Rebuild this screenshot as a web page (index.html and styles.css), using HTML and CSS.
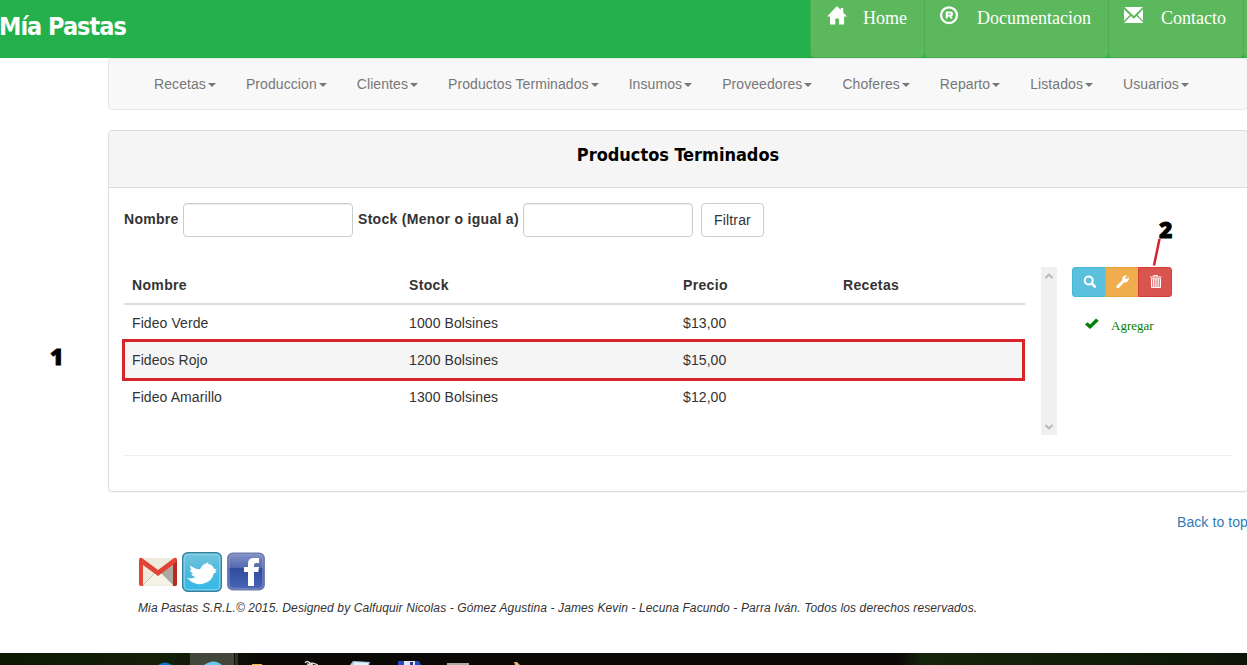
FILE: index.html
```
<!DOCTYPE html>
<html lang="es">
<head>
<meta charset="utf-8">
<title>Mía Pastas - Productos Terminados</title>
<link rel="stylesheet" href="styles.css">
</head>
<body>
<header class="top">
  <h1 class="brand">Mía Pastas</h1>
  <nav class="top-links">
    <a class="top-btn home"><svg class="top-icon" width="20" height="20" viewBox="0 0 20 20"><path fill="#fff" d="M10 0 0 10.500h3V18.500h5.300V12.500h3.600v6h5.200v-8h3L16.200 6.500V2h-2.400v2z"/></svg><span>Home</span></a>
    <a class="top-btn docs"><svg class="top-icon" width="20" height="20" viewBox="0 0 20 20"><circle cx="9" cy="9.200" r="7.900" fill="none" stroke="#fff" stroke-width="2.300"/><path fill="none" stroke="#fff" stroke-width="1.900" d="M6.700 12.500V6.500h3.600q1.800 0 1.800 1.500t-1.800 1.500H6.700M9.500 9.500l2.500 3"/></svg><span>Documentacion</span></a>
    <a class="top-btn contact"><svg class="top-icon" width="20" height="20" viewBox="0 0 20 20"><path fill="#fff" d="M.5 1h18.500l-9.200 9zM0 3.200 5.800 9 0 14.800zM19 3.200v11.600L13.700 9zM6.900 10.100l2.900 2.700 2.900-2.700 6.300 6.400v.5H.5v-.5z"/></svg><span>Contacto</span></a>
    <a class="top-btn more"></a>
  </nav>
</header>
<div class="container">
  <nav class="menu">
    <a>Recetas</a><a>Produccion</a><a>Clientes</a><a>Productos Terminados</a><a>Insumos</a><a>Proveedores</a><a>Choferes</a><a>Reparto</a><a>Listados</a><a>Usuarios</a>
  </nav>
  <section class="panel">
    <div class="panel-head"><h2>Productos Terminados</h2></div>
    <div class="panel-body">
      <form class="filter">
        <label class="l-name" for="n">Nombre</label><input id="n" type="text">
        <label class="l-stock" for="s">Stock (Menor o igual a)</label><input id="s" type="text">
        <button type="button">Filtrar</button>
      </form>
      <div class="content">
        <div class="grid">
          <div class="row head"><span>Nombre</span><span>Stock</span><span>Precio</span><span>Recetas</span></div>
          <div class="row"><span>Fideo Verde</span><span>1000 Bolsines</span><span>$13,00</span></div>
          <div class="row selected"><span>Fideos Rojo</span><span>1200 Bolsines</span><span>$15,00</span></div>
          <div class="row"><span>Fideo Amarillo</span><span>1300 Bolsines</span><span>$12,00</span></div>
        </div>
        <div class="scroll">
          <svg width="10" height="8" viewBox="0 0 10 8"><path d="M1.500 6 5 2.500 8.500 6"/></svg>
          <svg width="10" height="8" viewBox="0 0 10 8"><path d="M1.500 2 5 5.500 8.500 2"/></svg>
        </div>
        <div class="side">
          <div class="actions">
            <a class="act view"><svg width="14" height="14" viewBox="0 0 14 14"><circle cx="5.700" cy="5.500" r="4" fill="none" stroke="#fff" stroke-width="2"/><path stroke="#fff" stroke-width="2.600" stroke-linecap="round" d="m9.200 9 2.700 2.600"/></svg></a>
            <a class="act edit"><svg width="14" height="14" viewBox="0 0 14 14"><path fill="#fff" d="M12.700 2.300 10.900 4 9.400 3.600 9.300 2.300 11.200.7C9.300 0 7.200.8 6.500 2.500 6.100 3.500 6.200 4.400 6.500 5.100L.8 10.800a1.400 1.400 0 0 0 2 2L8.500 7.300c2.800.7 5.100-2 4.200-5z"/></svg></a>
            <a class="act del"><svg width="14" height="14" viewBox="0 0 14 14"><path fill="#fff" fill-opacity=".3" d="M2.500 4.500h9v8h-9z"/><path fill="none" stroke="#fff" d="M4.500 1.500v-1h4v1M1 2h11.500M2.500 4v8.500h9V4M4.700 4v8M6.900 4v8M9.200 4v8M2 3.800h10"/></svg></a>
          </div>
          <a class="add"><svg width="14" height="12" viewBox="0 0 14 12"><path fill="#008000" d="m0 6.500 2.500-2.300 2.600 2.300L11 .5l2.700 2.300-8.600 8.200z"/></svg><span>Agregar</span></a>
        </div>
      </div>
      <hr>
    </div>
  </section>
  <a class="back">Back to top</a>
  <footer>
    <div class="social">
      <svg width="40" height="40" viewBox="0 0 40 40"><rect x="2" y="6" width="36" height="28" rx="2" fill="#eeeadc"/><path fill="#c2c0b5" d="m22 20 14-11v24z"/><path fill="#f4f1e6" d="M5 33 17 21l3 2 3-2 12 12z"/><path fill="#aaa89f" d="m23 21 12-7v19z"/><path fill="none" stroke="#c8c5b8" d="m5 33 12-12"/><path fill="#e14337" d="M1 8q0-3 3-2l16 12L36 6q3-1 3 2v24q0 2-2 2h-2V13L20 24 5 13v21H3q-2 0-2-2z"/><path fill="#b82920" d="m35 13 4-4v23q0 2-2 2h-2z"/></svg>
      <svg width="40" height="40" viewBox="0 0 40 40"><defs><linearGradient id="t" x2="0" y2="1"><stop stop-color="#76c6dc"/><stop offset=".5" stop-color="#4cb9df"/><stop offset="1" stop-color="#35b9e9"/></linearGradient></defs><rect x=".7" y=".7" width="38.600" height="38.600" rx="5" fill="url(#t)" stroke="#347f9c" stroke-width="1.400"/><rect x="2.200" y="2.200" width="35.600" height="35.600" rx="4" fill="none" stroke="#91d8ec"/><path fill="#fff" d="M5 26q4.500 1.300 8.500-1-3.300-.5-4.300-3h2q-3-1.200-3.400-4.200l2 .2q-2.300-2-1.300-4.500 4 3.800 9.500 3.700Q20 12.500 26.500 10q-.5 1.500-.5 2 4 0 6 4.500l3 1.300q-.8 1-2.300 1.200l2 1.200q-1 1-2.700.8Q30 29 23 31q-9 4-18-5z"/></svg>
      <svg width="40" height="40" viewBox="0 0 40 40"><defs><linearGradient id="f" x2="0" y2="1"><stop stop-color="#8693c6"/><stop offset=".4" stop-color="#5269b0"/><stop offset=".42" stop-color="#304c9d"/><stop offset="1" stop-color="#4865b8"/></linearGradient></defs><rect x="1.800" y="1.300" width="36.400" height="36.400" rx="5" fill="url(#f)" stroke="#6f7cac" stroke-width="1.500"/><rect x="3.200" y="2.700" width="33.600" height="33.600" rx="4" fill="none" stroke="#8b9ad0" stroke-opacity=".7"/><path fill="#fff" d="M22 34V20h-4v-5h4v-3.800Q22 6 28 6h5v5h-3q-2 0-2 1.700V15h5l-.7 5H28v14z"/></svg>
    </div>
    <p>Mia Pastas S.R.L.© 2015. Designed by Calfuquir Nicolas - Gómez Agustina - James Kevin - Lecuna Facundo - Parra Iván. Todos los derechos reservados.</p>
  </footer>
</div>
<div class="taskbar">
  <svg width="1247" height="12" viewBox="0 0 1247 12"><defs><linearGradient id="b"><stop stop-color="#0c1905"/><stop offset=".13" stop-color="#142008"/><stop offset=".21" stop-color="#0b0905"/><stop offset=".72" stop-color="#0b0805"/><stop offset=".74" stop-color="#142509"/><stop offset="1" stop-color="#0c1607"/></linearGradient></defs><rect width="1247" height="12" fill="url(#b)"/><path fill="#42463b" d="M190 0h44v12h-44z"/><path fill="#30302c" d="M235 0h3v12h-3z"/><path fill="#0878cf" d="M158 12q7-5 14 0z"/><path fill="#65c8ee" d="M204 12q10-7 18 0z"/><path fill="#f1bd38" d="M252 11h10v1h-10z"/><path fill="none" stroke="#ddd" stroke-width="1.300" d="M305 10q2-3 5 0 4 0 8 2M307 11l6 1"/><path fill="#a9c7ec" d="m353 8 17 1-1 3h-19z"/><path fill="#e6f0fb" d="m355 9 13 1v2h-15z"/><path fill="#2448bd" d="M398 8h21l2 4h-23z"/><path fill="#e5e6ed" d="M404 8h11v4h-11z"/><path fill="#1c3bb1" d="M410 9h3v3h-3z"/><path fill="#aaa" d="M447 10h22v2h-22z"/><path fill="#e8b66d" d="M514 9h3l3 3h-5z"/></svg>
</div>
<span class="note one">1</span>
<span class="note two">2</span>
<svg class="pointer" width="10" height="30" viewBox="0 0 10 30"><path stroke="#d4232b" stroke-width="2.500" d="M7.500 1 2 27.500"/></svg>
</body>
</html>
```
FILE: styles.css
```
* { box-sizing: border-box; }
body { margin: 0; width: 1247px; height: 665px; position: relative; overflow: hidden; background: #fff; color: #333; font: 14px/20px "Liberation Sans", Arial, sans-serif; display: flex; flex-direction: column; }
svg { display: block; flex: none; }
.top { height: 58px; flex: none; background: #24b04b; display: flex; justify-content: space-between; overflow: hidden; }
.brand { margin: 12px 0 0 -1px; font: bold 25px/30px "DejaVu Sans Condensed", "DejaVu Sans", sans-serif; font-stretch: condensed; color: #fff; letter-spacing: -1px; white-space: nowrap; }
.top-links { display: flex; width: 437px; flex: none; }
.top-btn { height: 58px; flex: none; margin-right: -1px; border: 1px solid #4cae4c; border-top: 0; border-radius: 0 0 5px 5px; background: #5cb85c; color: #fff; display: flex; padding: 6px 0 0 16px; font: 18px/25px "Liberation Serif", "Times New Roman", serif; }
.top-btn span { margin-left: 16px; white-space: nowrap; }
.home { width: 115px; }
.docs { width: 185px; }
.docs svg, .contact svg { margin-left: -1px; margin-right: 1px; }
.contact { width: 136px; }
.more { width: 30px; }
.container { width: 1140px; margin-left: 108px; flex: none; display: flex; flex-direction: column; }
.menu { height: 52px; border: 1px solid #e7e7e7; border-radius: 4px; background: #f8f8f8; display: flex; padding: 15px 0 0 30px; color: #777; letter-spacing: .08px; }
.menu a { padding: 0 15px; display: flex; align-items: center; height: 20px; white-space: nowrap; }
.menu a::after { content: ""; margin: 2px 0 0 2px; border: 4px solid transparent; border-top-color: #777; border-bottom: 0; }
.panel { margin-top: 20px; height: 362px; border: 1px solid #ddd; border-radius: 4px; box-shadow: 0 1px 1px rgba(0,0,0,.05); }
.panel-head { height: 57px; border-bottom: 1px solid #ddd; background: #f5f5f5; border-radius: 3px 3px 0 0; padding-top: 13px; text-align: center; }
.panel-head h2 { margin: 0; font: bold 18px/21px "DejaVu Sans Condensed", "DejaVu Sans", sans-serif; font-stretch: condensed; color: #000; letter-spacing: -.02px; }
.panel-body { padding: 15px; }
.filter { display: flex; height: 34px; }
.filter label { font-weight: bold; line-height: 32px; white-space: nowrap; flex: none; letter-spacing: .3px; }
.l-name { width: 59px; }
.l-stock { width: 165px; margin-left: 5px; }
.filter input { width: 170px; height: 34px; border: 1px solid #ccc; border-radius: 4px; background: #fff; padding: 6px 12px; box-shadow: inset 0 1px 1px rgba(0,0,0,.075); }
.filter button { width: 63px; height: 34px; margin-left: 8px; border: 1px solid #ccc; border-radius: 4px; background: #fff; color: #333; font: 14px/20px "Liberation Sans", Arial, sans-serif; letter-spacing: .15px; padding: 0; }
.content { margin-top: 30px; height: 168px; display: flex; }
.grid { width: 901px; letter-spacing: .09px; }
.row { display: grid; grid-template-columns: 277px 274px 160px 1fr; height: 37px; line-height: 37px; padding-left: 8px; }
.head { height: 38px; border-bottom: 2px solid #ddd; font-weight: bold; letter-spacing: .35px; }
.selected { background: #f5f5f5; outline: 3px solid #d8232a; height: 36px; margin: 0 3px 1px 1px; padding-left: 7px; line-height: 36px; }
.scroll { width: 16px; margin-left: 16px; height: 168px; background: #f0f0f0; padding: 5px 3px 4px; display: flex; flex-direction: column; justify-content: space-between; }
.scroll path { fill: none; stroke: #b7b7b7; stroke-width: 1.8; }
.side { margin-left: 15px; }
.actions { display: flex; }
.act { height: 30px; width: 34px; border: 1px solid; margin-right: -1px; padding: 7px 0 0 10px; }
.view { background: #5bc0de; border-color: #46b8da; border-radius: 3px 0 0 3px; }
.edit { background: #f0ad4e; border-color: #eea236; }
.del { background: #d9534f; border-color: #d43f3a; border-radius: 0 3px 3px 0; }
.add { display: flex; margin: 20px 0 0 13px; color: green; font: 13px/18px "Liberation Serif", "Times New Roman", serif; }
.add svg { margin-top: 1px; }
.add span { margin-left: 12px; }
hr { height: 1px; border: 0; background: #eee; margin: 20px 0 0; }
.back { color: #337ab7; margin: 20px 0 0; align-self: flex-end; white-space: nowrap; letter-spacing: .09px; }
footer { padding-left: 30px; margin-top: 20px; }
.social { display: flex; gap: 4px; }
footer p { margin: 6px 0 0; font-size: 12px; line-height: 20px; font-style: italic; white-space: nowrap; letter-spacing: .11px; }
.taskbar { position: absolute; left: 0; top: 653px; }
.note { position: absolute; color: #000; font: 800 23px/24px "Open Sans", sans-serif; -webkit-text-stroke: .8px #000; }
.one { left: 50px; top: 344px; }
.two { left: 1159px; top: 217px; }
.pointer { position: absolute; left: 1152px; top: 238px; }
```
